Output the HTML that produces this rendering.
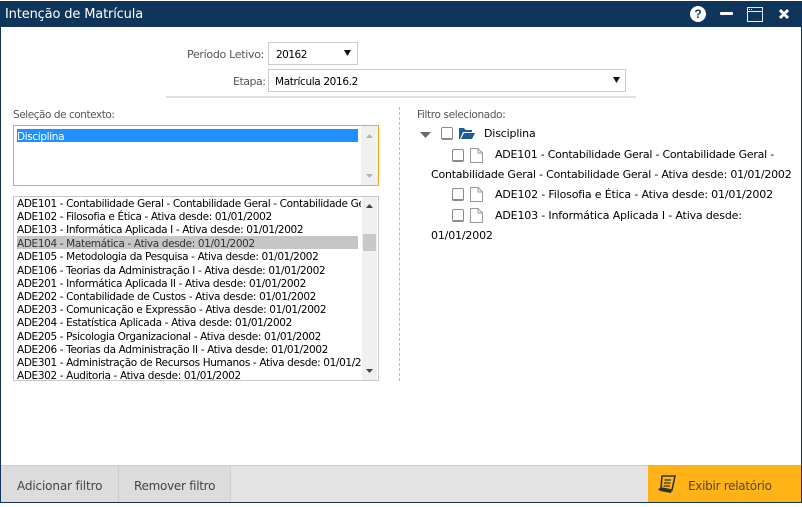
<!DOCTYPE html>
<html><head><meta charset="utf-8"><style>
html,body{margin:0;padding:0;background:#fff}
#p{position:relative;width:802px;height:507px;overflow:hidden;background:#fff;font-family:"DejaVu Sans",sans-serif;font-size:11px;color:#111}
#p div,#p svg{position:absolute}
.t{white-space:nowrap;line-height:14px;height:14px;letter-spacing:-.165px;color:#000}
.s{font-size:10.5px;letter-spacing:-.36px}
.g{color:#555}
.cb{width:10px;height:10px;border:1px solid #8a8a8a;border-bottom-width:2px;border-radius:2px;background:#fff}
</style></head><body><div id="p">
<div style="left:0;top:1px;width:802px;height:26px;background:#10355a"></div>
<div style="left:0;top:1px;width:1px;height:502px;background:#10355a"></div>
<div style="left:801px;top:1px;width:1px;height:502px;background:#10355a"></div>
<div class="t" style="left:5px;top:8px;color:#fff;font-size:13px;letter-spacing:-.15px">Intenção de Matrícula</div>
<svg style="left:689px;top:5px" width="18" height="18"><circle cx="9" cy="9" r="8" fill="#fff"/><text x="9" y="13" text-anchor="middle" font-family="Liberation Sans" font-weight="bold" font-size="12" fill="#10355a">?</text></svg>
<div style="left:720px;top:12px;width:13px;height:3px;background:#fff;border-radius:1px"></div>
<svg style="left:747px;top:7px" width="17" height="15"><rect x=".5" y=".5" width="15" height="14" fill="#10355a" stroke="#e8ecef"/><rect x="1" y="4" width="14" height="1" fill="#e8ecef"/><path d="M2 2.500H6" stroke="#d8dde0" stroke-dasharray="1 1"/></svg>
<svg style="left:778px;top:8px" width="12" height="12"><path d="M2 2L10 10M10 2L2 10" stroke="#fff" stroke-width="3"/></svg>

<div class="t g" style="left:187px;top:48px;letter-spacing:-.3px">Período Letivo:</div>
<div style="left:268px;top:42px;width:88px;height:21px;border:1px solid #ccc"></div>
<div class="t s" style="left:276px;top:48px;letter-spacing:-.5px">20162</div>
<svg style="left:343px;top:49px" width="9" height="8"><path d="M1 1H8L4.500 7Z" fill="#111"/></svg>
<div class="t g" style="left:233px;top:75px;letter-spacing:-.5px">Etapa:</div>
<div style="left:268px;top:69px;width:356px;height:21px;border:1px solid #ccc"></div>
<div class="t s" style="left:275px;top:75px">Matrícula 2016.2</div>
<svg style="left:612px;top:76px" width="9" height="8"><path d="M1 1H8L4.500 7Z" fill="#111"/></svg>
<div style="left:166px;top:96px;width:470px;height:2px;background:#e0e0e0"></div>

<div class="t g s" style="left:13px;top:108px;letter-spacing:-.45px">Seleção de contexto:</div>
<div style="left:13px;top:125px;width:364px;height:59px;border:1px solid #f5a81c"></div>
<div style="left:361px;top:126px;width:17px;height:59px;background:#f0f0f0"></div>
<div style="left:17px;top:129px;width:341px;height:13px;background:#1e90ff"></div>
<div class="t s" style="left:17px;top:130px;color:#fff">Disciplina</div>
<svg style="left:365px;top:133px" width="9" height="6"><path d="M1 5H8L4.500 1Z" fill="#b4b4b4"/></svg>
<svg style="left:365px;top:173px" width="9" height="6"><path d="M1 1H8L4.500 5Z" fill="#b4b4b4"/></svg>

<div style="left:13px;top:196px;width:364px;height:183px;border:1px solid #c8c8c8"></div>
<div style="left:362px;top:197px;width:15px;height:183px;background:#f0f0f0"></div>
<div style="left:363px;top:234px;width:13px;height:17px;background:#c8c8c8"></div>
<div style="left:17px;top:236px;width:341px;height:13px;background:#c6c6c6"></div>
<svg style="left:365px;top:203px" width="9" height="6"><path d="M1 5H8L4.500 1Z" fill="#444"/></svg>
<svg style="left:365px;top:368px" width="9" height="6"><path d="M1 1H8L4.500 5Z" fill="#444"/></svg>
<div style="left:17px;top:197px;width:344px;height:183px;overflow:hidden">
<div class="t s" style="left:0;top:0">ADE101 - Contabilidade Geral - Contabilidade Geral - Contabilidade Geral - Contabilidade Geral</div>
<div class="t s" style="left:0;top:13px">ADE102 - Filosofia e Ética - Ativa desde: 01/01/2002</div>
<div class="t s" style="left:0;top:26px">ADE103 - Informática Aplicada I - Ativa desde: 01/01/2002</div>
<div class="t s" style="left:0;top:40px;color:#333">ADE104 - Matemática - Ativa desde: 01/01/2002</div>
<div class="t s" style="left:0;top:53px">ADE105 - Metodologia da Pesquisa - Ativa desde: 01/01/2002</div>
<div class="t s" style="left:0;top:67px">ADE106 - Teorias da Administração I - Ativa desde: 01/01/2002</div>
<div class="t s" style="left:0;top:80px">ADE201 - Informática Aplicada II - Ativa desde: 01/01/2002</div>
<div class="t s" style="left:0;top:93px">ADE202 - Contabilidade de Custos - Ativa desde: 01/01/2002</div>
<div class="t s" style="left:0;top:106px">ADE203 - Comunicação e Expressão - Ativa desde: 01/01/2002</div>
<div class="t s" style="left:0;top:119px">ADE204 - Estatística Aplicada - Ativa desde: 01/01/2002</div>
<div class="t s" style="left:0;top:133px">ADE205 - Psicologia Organizacional - Ativa desde: 01/01/2002</div>
<div class="t s" style="left:0;top:146px">ADE206 - Teorias da Administração II - Ativa desde: 01/01/2002</div>
<div class="t s" style="left:0;top:159px">ADE301 - Administração de Recursos Humanos - Ativa desde: 01/01/2002</div>
<div class="t s" style="left:0;top:172px">ADE302 - Auditoria - Ativa desde: 01/01/2002</div>
</div>

<div style="left:399px;top:107px;width:0;height:274px;border-left:1px dashed #bbb"></div>
<div class="t g s" style="left:417px;top:108px">Filtro selecionado:</div>
<svg style="left:420px;top:132px" width="11" height="7"><path d="M0 0H11L5.500 6Z" fill="#6b6b6b"/></svg>
<div class="cb" style="left:441px;top:127px"></div>
<svg style="left:459px;top:127px" width="16" height="13"><path d="M0 12V1H5L6.500 3H13V5H4L1 12Z M2 12L5 6H16L13 12Z" fill="#1f5a9c"/></svg>
<div class="t" style="left:484px;top:127px">Disciplina</div>

<div class="cb" style="left:452px;top:149px"></div>
<svg style="left:470px;top:148px" width="13" height="15"><path d="M.5 .5H8L12.500 5V14.500H.5Z M8 .5V5H12.500" fill="#fff" stroke="#999"/></svg>
<div class="t" style="left:495px;top:148px;letter-spacing:-.245px">ADE101 - Contabilidade Geral - Contabilidade Geral -</div>
<div class="t" style="left:431px;top:168px;letter-spacing:-.225px">Contabilidade Geral - Contabilidade Geral - Ativa desde: 01/01/2002</div>
<div class="cb" style="left:452px;top:188px"></div>
<svg style="left:470px;top:187px" width="13" height="15"><path d="M.5 .5H8L12.500 5V14.500H.5Z M8 .5V5H12.500" fill="#fff" stroke="#999"/></svg>
<div class="t" style="left:495px;top:188px">ADE102 - Filosofia e Ética - Ativa desde: 01/01/2002</div>
<div class="cb" style="left:452px;top:209px"></div>
<svg style="left:470px;top:208px" width="13" height="15"><path d="M.5 .5H8L12.500 5V14.500H.5Z M8 .5V5H12.500" fill="#fff" stroke="#999"/></svg>
<div class="t" style="left:495px;top:209px">ADE103 - Informática Aplicada I - Ativa desde:</div>
<div class="t" style="left:431px;top:229px">01/01/2002</div>

<div style="left:1px;top:465px;width:800px;height:37px;background:#e3e3e3;border-top:1px solid #ccc;box-sizing:border-box"></div>
<div style="left:1px;top:466px;width:117px;height:36px;background:#dcdcdc"></div>
<div style="left:118px;top:466px;width:1px;height:36px;background:#ccc"></div>
<div style="left:119px;top:466px;width:111px;height:36px;background:#dcdcdc"></div>
<div style="left:230px;top:466px;width:1px;height:36px;background:#d0d0d0"></div>
<div class="t" style="left:17px;top:479px;color:#444;font-size:12px;letter-spacing:-.14px">Adicionar filtro</div>
<div class="t" style="left:134px;top:479px;color:#444;font-size:12px;letter-spacing:-.28px">Remover filtro</div>
<div style="left:648px;top:465px;width:153px;height:37px;background:#ffb316"></div>
<svg style="left:657px;top:475px" width="20" height="19"><path d="M5 1H18L15 15L4 13Z" fill="#ffb316" stroke="#333" stroke-width="1.600"/><path d="M7.500 5H14M7 8H13.500M6.500 11H13" stroke="#333" stroke-width="1.300"/><path d="M1 14L4 12.500L15 15.500L14 18L3 16Z" fill="#333"/></svg>
<div class="t" style="left:688px;top:479px;color:#5a4a18;font-size:12px;letter-spacing:-.28px">Exibir relatório</div>
<div style="left:0;top:502px;width:802px;height:1px;background:#10355a"></div>
</div></body></html>
